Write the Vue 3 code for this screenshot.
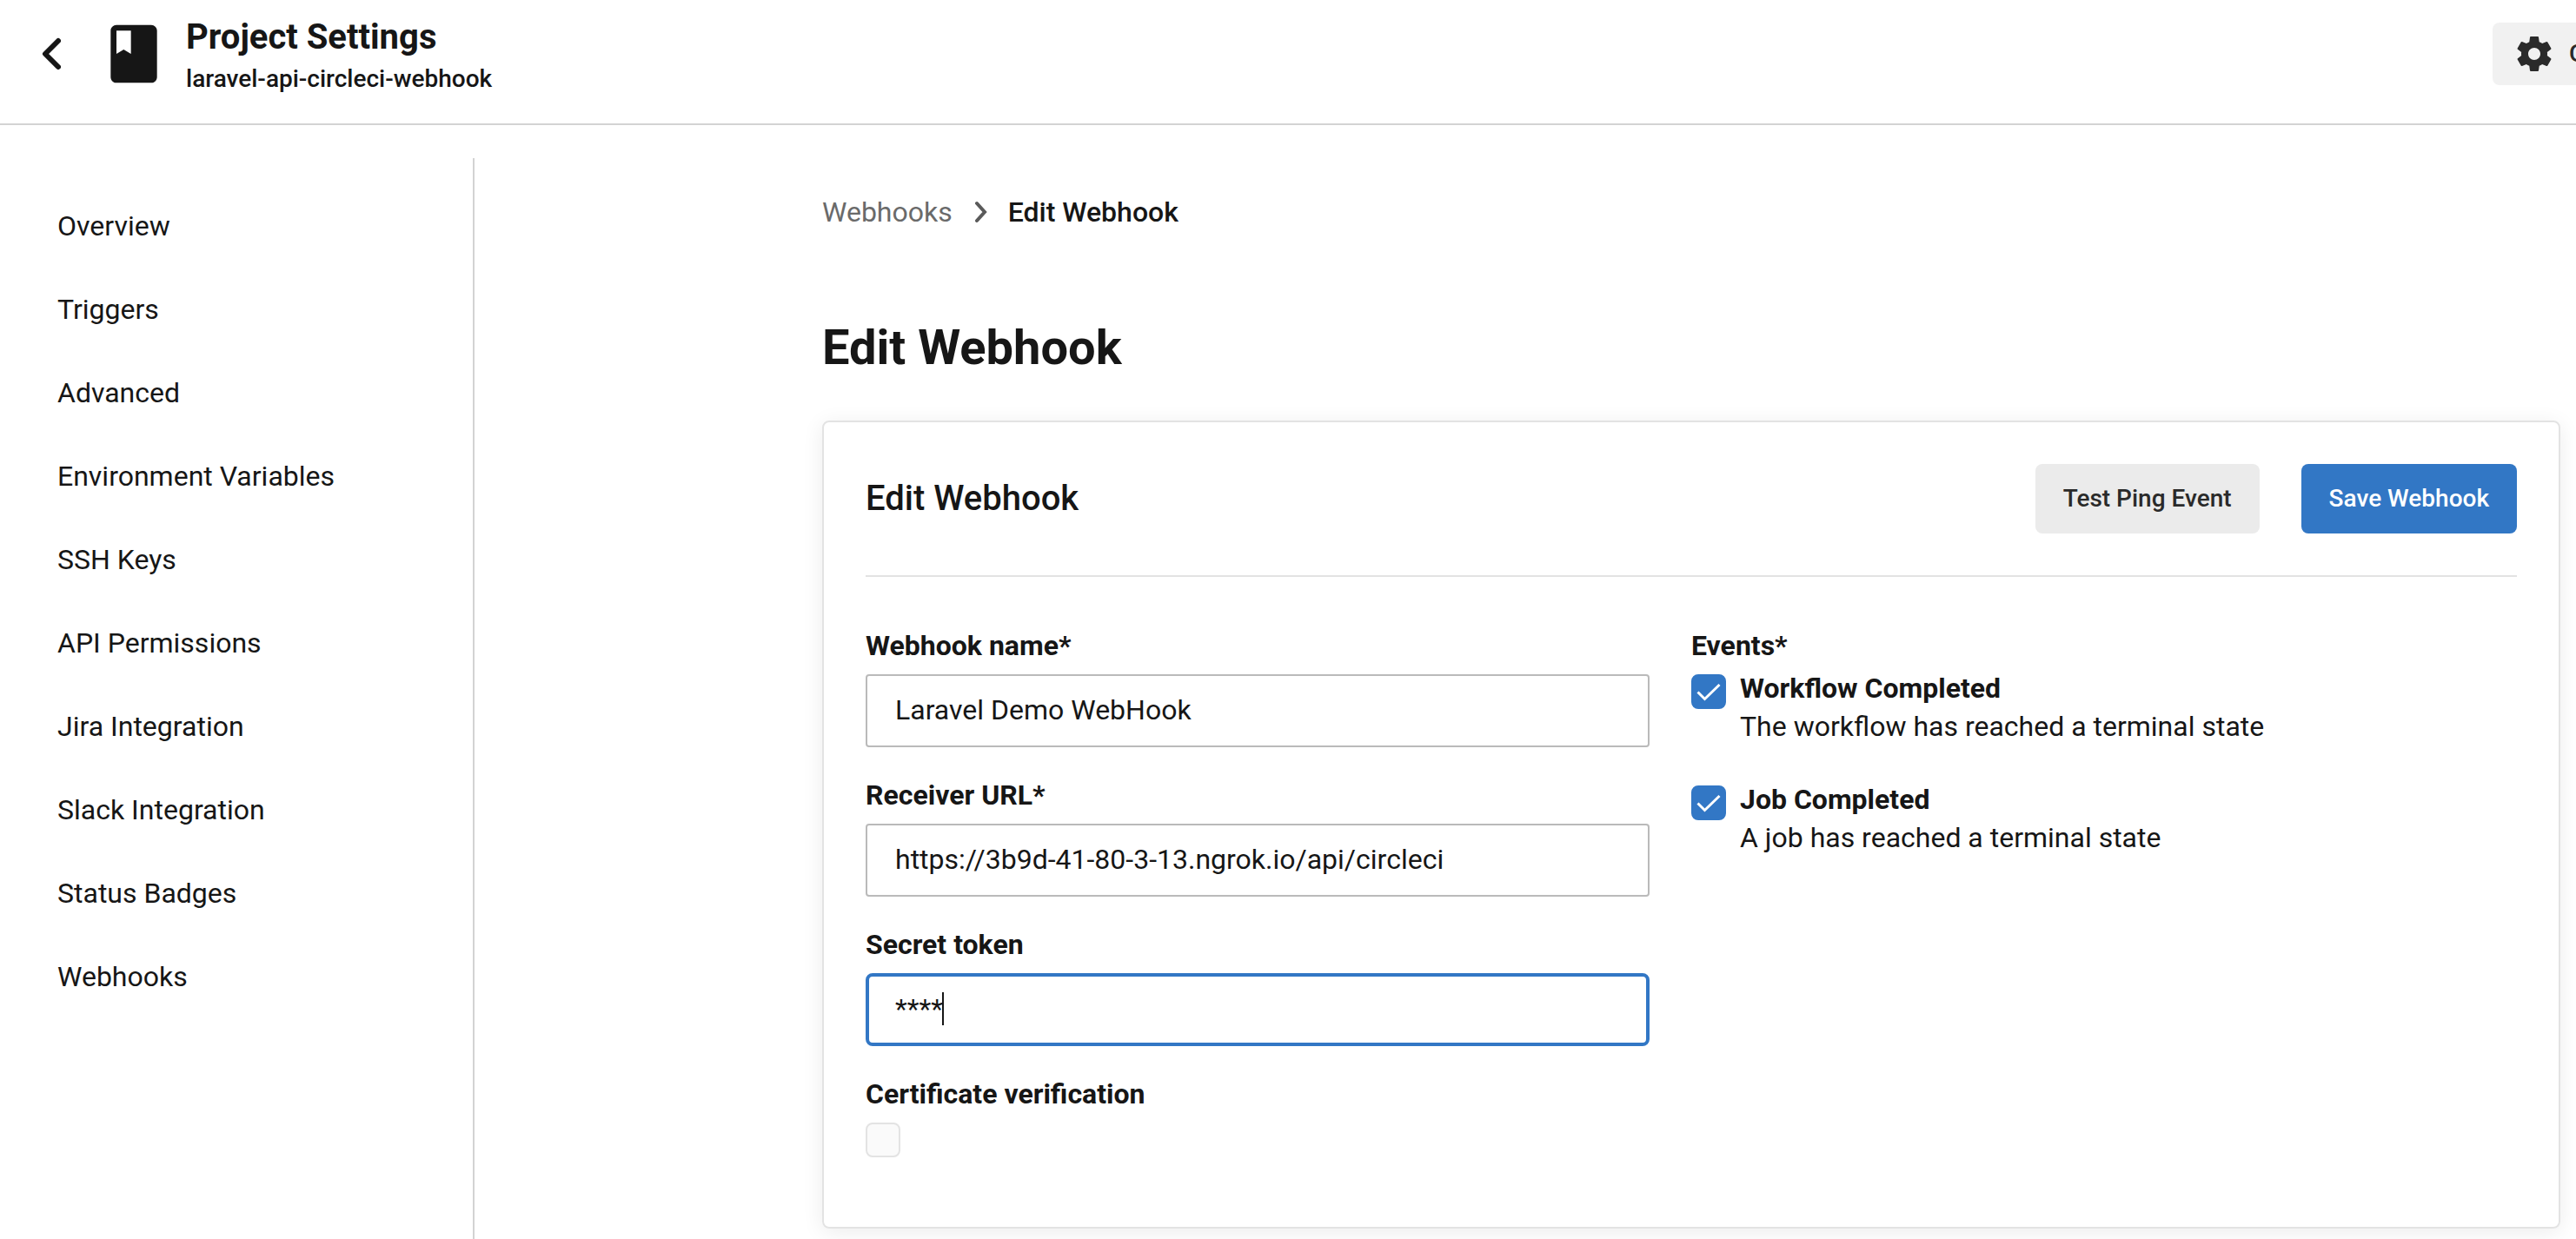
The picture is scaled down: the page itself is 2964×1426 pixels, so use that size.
<script setup>
import { ref } from 'vue'

const navItems = [
  'Overview',
  'Triggers',
  'Advanced',
  'Environment Variables',
  'SSH Keys',
  'API Permissions',
  'Jira Integration',
  'Slack Integration',
  'Status Badges',
  'Webhooks',
]

const name = ref('Laravel Demo WebHook')
const url = ref('https://3b9d-41-80-3-13.ngrok.io/api/circleci')
const secret = ref('****')
const verify = ref(false)

const events = ref([
  { id: 'workflow', title: 'Workflow Completed', text: 'The workflow has reached a terminal state', on: true },
  { id: 'job', title: 'Job Completed', text: 'A job has reached a terminal state', on: true },
])
</script>

<template>
  <div class="page">
    <header class="topbar">
      <button class="back" type="button" aria-label="Back">
        <svg viewBox="0 0 24 40" width="24" height="40">
          <path d="M21 5 6 20l15 15" fill="none" stroke="currentColor" stroke-width="6" stroke-linecap="round" stroke-linejoin="round" />
        </svg>
      </button>
      <svg class="book" viewBox="0 0 24 24" width="80" height="80" aria-hidden="true">
        <path fill="currentColor" d="M18 2H6c-1.100 0-2 .9-2 2v16c0 1.100.9 2 2 2h12c1.100 0 2-.9 2-2V4c0-1.100-.9-2-2-2zM6 4h5v8l-2.500-1.500L6 12V4z" />
      </svg>
      <div class="project">
        <div class="project-title">Project Settings</div>
        <div class="project-name">laravel-api-circleci-webhook</div>
      </div>
      <button class="org" type="button">
        <svg viewBox="0 0 24 24" width="48" height="48" aria-hidden="true">
          <path fill="currentColor" d="M19.430 12.980c.04-.32.07-.64.07-.98s-.03-.66-.07-.98l2.110-1.650c.19-.15.24-.42.12-.64l-2-3.460c-.12-.22-.39-.3-.61-.22l-2.490 1c-.52-.4-1.080-.73-1.690-.98l-.38-2.650C14.460 2.180 14.250 2 14 2h-4c-.25 0-.46.18-.49.42l-.38 2.650c-.61.25-1.170.59-1.690.98l-2.490-1c-.23-.09-.49 0-.61.22l-2 3.460c-.13.22-.07.49.12.64l2.110 1.650c-.04.32-.07.65-.07.98s.03.66.07.98l-2.110 1.650c-.19.15-.24.42-.12.64l2 3.460c.12.22.39.3.61.22l2.490-1c.52.4 1.080.73 1.690.98l.38 2.650c.03.24.24.42.49.42h4c.25 0 .46-.18.49-.42l.38-2.650c.61-.25 1.170-.59 1.690-.98l2.490 1c.23.09.49 0 .61-.22l2-3.460c.12-.22.07-.49-.12-.64l-2.110-1.650zM12 15.500c-1.930 0-3.500-1.570-3.500-3.500s1.570-3.500 3.500-3.500 3.500 1.570 3.500 3.500-1.570 3.500-3.500 3.500z" />
        </svg>
        <span>Organization Settings</span>
      </button>
    </header>

    <div class="body">
      <nav class="sidebar">
        <a v-for="item in navItems" :key="item" href="#">{{ item }}</a>
      </nav>

      <main class="main">
        <div class="crumbs">
          <a href="#">Webhooks</a>
          <svg viewBox="0 0 16 28" width="16" height="28" aria-hidden="true">
            <path d="M4 4l9 10-9 10" fill="none" stroke="currentColor" stroke-width="4" stroke-linecap="round" />
          </svg>
          <span>Edit Webhook</span>
        </div>

        <h1>Edit Webhook</h1>

        <section class="card">
          <div class="card-head">
            <h2>Edit Webhook</h2>
            <button class="btn" type="button">Test Ping Event</button>
            <button class="btn primary" type="button">Save Webhook</button>
          </div>

          <form class="form" @submit.prevent>
            <div class="fields">
              <div class="field">
                <label for="name">Webhook name*</label>
                <input id="name" v-model="name" class="text" type="text" />
              </div>
              <div class="field">
                <label for="url">Receiver URL*</label>
                <input id="url" v-model="url" class="text" type="text" />
              </div>
              <div class="field">
                <label for="secret">Secret token</label>
                <div class="active">
                  <input id="secret" v-model="secret" class="text" type="text" />
                  <span class="caret"></span>
                </div>
              </div>
              <div class="field">
                <label for="verify">Certificate verification</label>
                <input id="verify" v-model="verify" class="check" type="checkbox" />
              </div>
            </div>

            <fieldset class="events">
              <legend>Events*</legend>
              <div v-for="e in events" :key="e.id" class="event">
                <span class="tick">
                  <input :id="e.id" v-model="e.on" class="check" type="checkbox" />
                  <svg v-if="e.on" viewBox="0 0 40 40" width="40" height="40" aria-hidden="true">
                    <path d="M7.500 20.500 15.500 28.500 32.500 12" fill="none" stroke="#fff" stroke-width="3" />
                  </svg>
                </span>
                <label :for="e.id">
                  <strong>{{ e.title }}</strong>
                  <span>{{ e.text }}</span>
                </label>
              </div>
            </fieldset>
          </form>
        </section>
      </main>
    </div>
  </div>
</template>

<style>
body {
  margin: 0;
  background: #fff;
}
</style>

<style scoped>
.page {
  display: flex;
  flex-direction: column;
  min-height: 100vh;
  overflow: hidden;
  color: #161616;
  font-family: Roboto, 'Liberation Sans', sans-serif;
  font-size: 32px;
  line-height: 48px;
}

.page *,
.page {
  box-sizing: border-box;
}

button,
input {
  font: inherit;
  color: inherit;
}

a {
  color: inherit;
  text-decoration: none;
}

svg {
  display: block;
  flex: none;
}

.topbar {
  display: flex;
  align-items: flex-start;
  height: 144px;
  padding: 18px 0 0 46px;
  border-bottom: 2px solid #d3d3d3;
}

.back {
  margin: 24px 44px 0 0;
  padding: 0;
  border: 0;
  background: none;
}

.book {
  margin-top: 4px;
}

.project {
  flex: 1;
  padding: 1px 0 0 20px;
}

.project-title {
  font-size: 40px;
  font-weight: 700;
}

.project-name {
  font-size: 28px;
  font-weight: 500;
}

.org {
  display: flex;
  flex: 0 0 96px;
  align-items: center;
  gap: 16px;
  height: 72px;
  margin-top: 8px;
  padding: 0 0 0 24px;
  border: 0;
  border-radius: 8px 0 0 8px;
  background: #f1f1f1;
  color: #2a2a2a;
  font-size: 28px;
  font-weight: 500;
  white-space: nowrap;
  overflow: hidden;
}

.body {
  display: flex;
  flex: 1;
}

.sidebar {
  display: flex;
  flex: 0 0 546px;
  flex-direction: column;
  gap: 48px;
  margin-top: 38px;
  padding: 54px 0 0 66px;
  border-right: 2px solid #d3d3d3;
}

.main {
  flex: 1;
  min-width: 0;
  padding: 76px 18px 12px 400px;
}

.crumbs {
  display: flex;
  align-items: center;
  gap: 24px;
  font-weight: 500;
}

.crumbs a {
  color: #6a6a6a;
  font-weight: 400;
}

.crumbs svg {
  color: #5a5a5a;
}

h1 {
  margin: 96px 0 48px;
  font-size: 56px;
  line-height: 72px;
  font-weight: 700;
}

.card {
  padding: 48px;
  border: 2px solid #e3e3e3;
  border-radius: 8px;
  box-shadow: 0 4px 24px rgba(0, 0, 0, 0.08);
}

.card-head {
  display: flex;
  align-items: center;
  gap: 48px;
  padding-bottom: 48px;
  border-bottom: 2px solid #e3e3e3;
}

h2 {
  flex: 1;
  margin: 0;
  font-size: 40px;
  font-weight: 500;
}

.btn {
  height: 80px;
  padding: 0 32px;
  border: 0;
  border-radius: 8px;
  background: #ebebeb;
  color: #2a2a2a;
  font-size: 28px;
  font-weight: 500;
}

.btn.primary {
  background: #3277c5;
  color: #fff;
}

.form {
  display: grid;
  grid-template-columns: 1fr 1fr;
  padding-top: 56px;
}

.fields {
  padding-right: 48px;
}

.field {
  margin-bottom: 32px;
}

.field > label,
legend {
  display: block;
  margin-bottom: 10px;
  padding: 0;
  line-height: 46px;
  font-weight: 700;
}

.text {
  display: block;
  width: 100%;
  height: 84px;
  padding: 0 32px 2px;
  border: 2px solid #bababa;
  border-radius: 4px;
  background: #fff;
  outline: 0;
}

.active {
  position: relative;
}

.active .text {
  padding: 0 30px 2px;
  border: 4px solid #3277c5;
  border-radius: 8px;
}

.caret {
  position: absolute;
  top: 22px;
  left: 88px;
  width: 2px;
  height: 38px;
  background: #161616;
}

.check {
  display: block;
  appearance: none;
  width: 40px;
  height: 40px;
  margin: 0;
  border: 2px solid #e3e3e3;
  border-radius: 8px;
  background: #fafafa;
}

.check:checked {
  border-color: #3277c5;
  background: #3277c5;
}

.events {
  min-width: 0;
  margin: 0;
  padding: 0;
  border: 0;
}

.events legend {
  margin-bottom: 4px;
}

.event {
  display: flex;
  gap: 16px;
  margin-bottom: 40px;
  line-height: 44px;
}

.tick {
  display: grid;
  align-self: flex-start;
  margin-top: 6px;
}

.tick > * {
  grid-area: 1 / 1;
}

.tick svg {
  pointer-events: none;
}

.event label {
  display: flex;
  flex-direction: column;
}

strong {
  font-weight: 700;
}
</style>
